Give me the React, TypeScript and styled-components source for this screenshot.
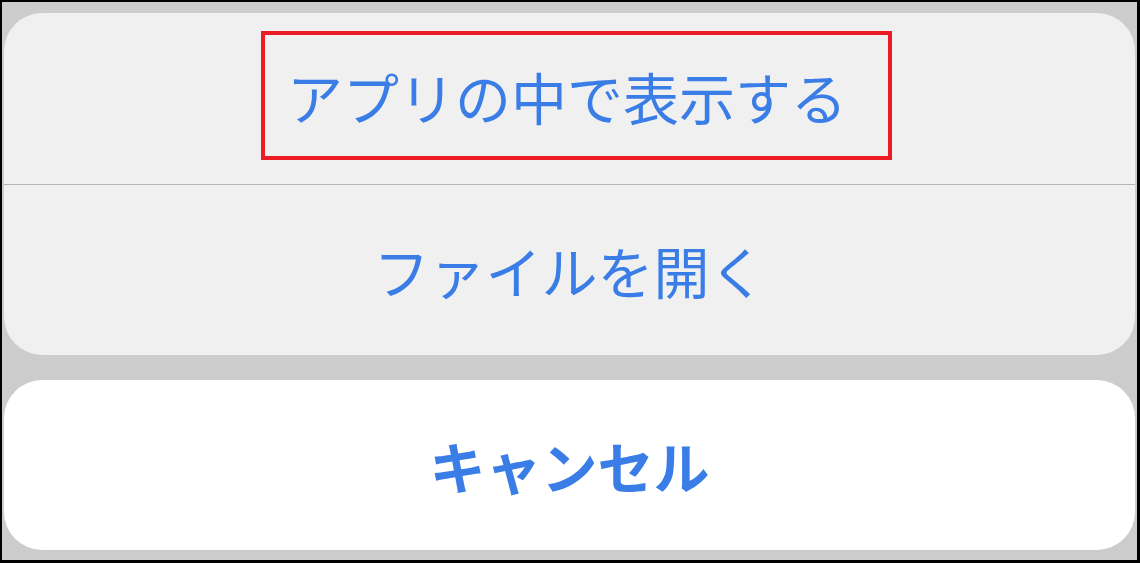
import React from 'react';
import styled, { createGlobalStyle } from 'styled-components';

const GlobalStyle = createGlobalStyle`
  html, body {
    margin: 0;
    padding: 0;
    background: #000000;
  }
  body {
    font-family: "Noto Sans CJK JP", "Noto Sans", sans-serif;
  }
`;

const Frame = styled.div`
  box-sizing: border-box;
  width: 1140px;
  height: 563px;
  border-style: solid;
  border-color: #000000;
  border-width: 2px 3px 3px 2px;
  background: #cccccc;
  padding: 11px 2px 10px 2px;
  display: flex;
  flex-direction: column;
  gap: 25px;
`;

const Sheet = styled.div<{ $white?: boolean }>`
  background: ${(p) => (p.$white ? '#ffffff' : '#f0f0f0')};
  border-radius: 38px;
  overflow: hidden;
  display: flex;
  flex-direction: column;
`;

const Action = styled.div<{ $height: number; $bold?: boolean; $divider?: boolean }>`
  height: ${(p) => p.$height}px;
  display: flex;
  align-items: center;
  justify-content: center;
  color: #3a7de6;
  font-size: 56px;
  font-weight: ${(p) => (p.$bold ? 700 : 400)};
  border-bottom: ${(p) => (p.$divider ? '1px solid #b4b4b4' : 'none')};
  white-space: nowrap;
`;

const Highlight = styled.span`
  box-sizing: border-box;
  display: inline-flex;
  align-items: center;
  width: 631px;
  height: 129px;
  margin: -6px 0 0 14px;
  padding: 0 0 0 22px;
  border: 4px solid #ec1c24;
`;

const Label = styled.span`
  line-height: 1;
`;

export default function App() {
  return (
    <>
      <GlobalStyle />
      <Frame>
        <Sheet>
          <Action $height={171} $divider>
            <Highlight>
              <Label>アプリの中で表示する</Label>
            </Highlight>
          </Action>
          <Action $height={170}>
            <Label>ファイルを開く</Label>
          </Action>
        </Sheet>
        <Sheet $white>
          <Action $height={170} $bold>
            <Label>キャンセル</Label>
          </Action>
        </Sheet>
      </Frame>
    </>
  );
}
